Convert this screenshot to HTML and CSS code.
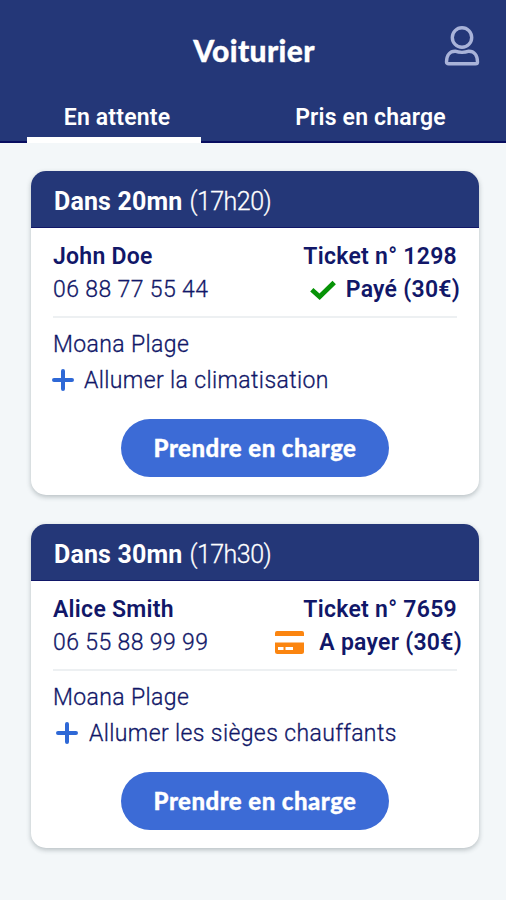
FILE: index.html
```html
<!DOCTYPE html>
<html lang="fr">
<head>
<meta charset="utf-8">
<title>Voiturier</title>
<link rel="stylesheet" href="styles.css">
</head>
<body>
<header class="header">
  <div class="topbar">
    <h1 class="title">Voiturier</h1>
    <svg class="user" width="38" height="42" viewBox="0 0 38 42" fill="none" stroke="#a9b3d9" stroke-width="3.4">
      <circle cx="19" cy="12.5" r="9.7"/>
      <path d="M12 26.2Q19 28.6 26 26.2C31 26.2 34.5 30 34.5 37Q34.5 38.8 32.5 38.8H5.500Q3.500 38.800 3.500 37C3.500 30 7 26.200 12 26.200Z"/>
    </svg>
  </div>
  <nav class="tabs">
    <a class="tab tab-active">En attente</a>
    <a class="tab tab-right">Pris en charge</a>
  </nav>
</header>
<main class="list">
  <article class="card">
    <div class="card-head"><b>Dans 20mn</b><span class="hour">(17h20)</span></div>
    <div class="card-body">
      <div class="row strong"><span>John Doe</span><span>Ticket n° 1298</span></div>
      <div class="row"><span class="phone">06 88 77 55 44</span>
        <span class="status paid"><svg width="26" height="20" viewBox="0 0 26 20" fill="none" stroke="#079307" stroke-width="4.8"><path d="M1.800 9.800L9.600 16.700L24.200 2.500"/></svg><span>Payé (30€)</span></span>
      </div>
      <hr class="line">
      <div class="place">Moana Plage</div>
      <div class="option"><svg width="22" height="22" viewBox="0 0 22 22" stroke="#2e68d6" stroke-width="4" stroke-linecap="round"><path d="M11 2V20M2 11H20"/></svg><span>Allumer la climatisation</span></div>
      <button class="take">Prendre en charge</button>
    </div>
  </article>
  <article class="card">
    <div class="card-head"><b>Dans 30mn</b><span class="hour">(17h30)</span></div>
    <div class="card-body">
      <div class="row strong"><span>Alice Smith</span><span>Ticket n° 7659</span></div>
      <div class="row"><span class="phone">06 55 88 99 99</span>
        <span class="status due"><svg width="29" height="23" viewBox="0 0 29 23"><path fill="#fb8510" d="M2 0H27Q29 0 29 2V5H0V2Q0 0 2 0ZM0 11.500H29V20.500Q29 23 26.500 23H2.500Q0 23 0 20.500Z"/><path fill="#fff" d="M3 16H8.500V19H3ZM10.500 16H18V19H10.500Z"/></svg><span>A payer (30€)</span></span>
      </div>
      <hr class="line">
      <div class="place">Moana Plage</div>
      <div class="option option-heat"><svg width="22" height="22" viewBox="0 0 22 22" stroke="#2e68d6" stroke-width="4" stroke-linecap="round"><path d="M11 2V20M2 11H20"/></svg><span>Allumer les sièges chauffants</span></div>
      <button class="take">Prendre en charge</button>
    </div>
  </article>
</main>
</body>
</html>
```
FILE: styles.css
```css
* { box-sizing: border-box; }
body {
  margin: 0;
  min-height: 900px;
  background: #f3f7f9;
  color: #111768;
  font-family: Roboto, "Liberation Sans", sans-serif;
  font-size: 23px;
  white-space: nowrap;
}
.header { height: 143px; background: #243778; color: #fff; border-bottom: 2px solid #080d60; }
.topbar { height: 94px; display: grid; grid-template-columns: 1fr auto 1fr; padding-right: 25px; padding-left: 27px; }
.title { grid-column: 2; margin: 34px 0 0; font: 900 30px/32px Lato, sans-serif; letter-spacing: .35px; -webkit-text-stroke: .3px; }
.user { justify-self: end; margin-top: 25px; }
.tabs { display: flex; height: 49px; padding: 0 27px; font-size: 23px; font-weight: 600; justify-content: space-between; letter-spacing: .18px; }
.tab { height: 49px; padding-top: 9px; line-height: 30px; text-align: center; }
.tab-active { width: 174px; padding-left: 6px; border-bottom: 6px solid #fff; }
.tab-right { width: 218px; padding-left: 1px; }
.list { display: flex; flex-direction: column; gap: 29px; padding: 28px 27px 0 31px; }
.card { height: 324px; border-radius: 15px; background: #fff; overflow: hidden; box-shadow: 0 2px 5px rgba(30, 45, 55, .28); }
.card-head { display: flex; gap: 7px; height: 57px; padding: 1px 0 0 23px; line-height: 60px; background: #243778; color: #fff; font-size: 25px; border-bottom: 1px solid #111768; }
.card-head b { font-weight: 700; letter-spacing: .15px; }
.hour { font-weight: 300; letter-spacing: -.5px; -webkit-text-stroke: .3px; }
.card-body { padding: 13px 22px 0; }
.row { display: flex; justify-content: space-between; height: 33px; line-height: 32px; }
.strong { font-weight: 600; letter-spacing: .27px; }
.phone, .place, .option { font-weight: 300; letter-spacing: .38px; -webkit-text-stroke: .3px; }
.status { display: flex; align-items: center; height: 32px; font-weight: 600; letter-spacing: .26px; }
.paid { gap: 10px; margin-right: -3px; }
.due { gap: 15px; margin-right: -5px; }
.due svg { margin-bottom: 2px; }
.line { height: 2px; margin: 9px 0 0; border: 0; background: #edf0f2; }
.place { height: 36px; margin-top: 11px; line-height: 32px; }
.option { display: flex; align-items: center; gap: 10px; height: 32px; margin: -1px 0 0 -1px; }
.option-heat { margin-left: 3px; gap: 11px; }
.take { display: block; width: 268px; height: 58px; margin: 23px auto 0; padding: 0 0 1px; border: 0; border-radius: 29px; background: #3c6bd6; color: #fff; font: 900 24px/30px Lato, sans-serif; letter-spacing: .45px; -webkit-text-stroke: .3px; }
```
